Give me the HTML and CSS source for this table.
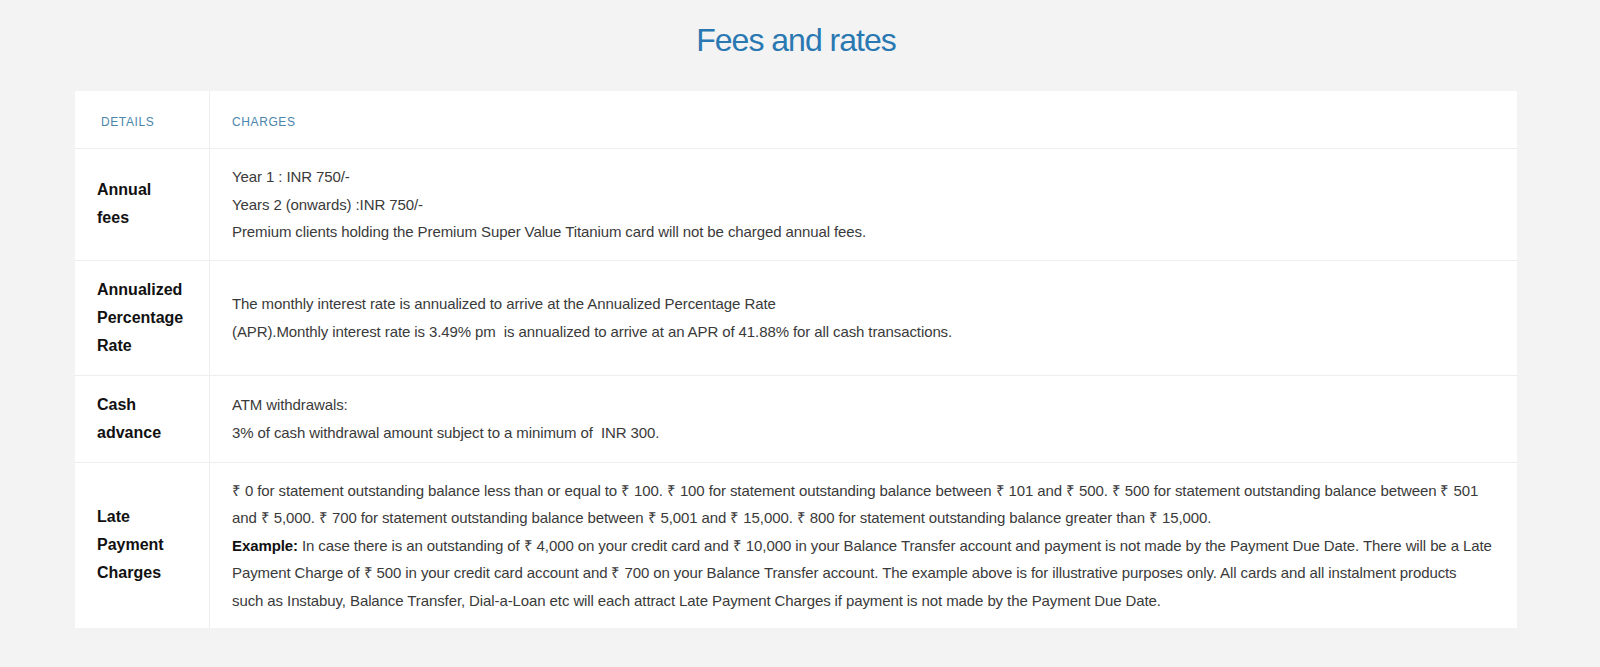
FILE: index.html
```html
<!DOCTYPE html>
<html lang="en">
<head>
<meta charset="utf-8">
<title>Fees and rates</title>
<link rel="stylesheet" href="styles.css">
</head>
<body>
<main class="page">
  <h1 class="title">Fees and rates</h1>
  <div class="fees">
    <div class="row head">
      <div class="label">DETAILS</div>
      <div class="value">CHARGES</div>
    </div>
    <div class="row">
      <div class="label">Annual fees</div>
      <div class="value">Year 1 : INR 750/-<br>Years 2 (onwards) :INR 750/-<br>Premium clients holding the Premium Super Value Titanium card will not be charged annual fees.</div>
    </div>
    <div class="row">
      <div class="label">Annualized Percentage Rate</div>
      <div class="value">The monthly interest rate is annualized to arrive at the Annualized Percentage Rate<br>(APR).Monthly interest rate is 3.49% pm&nbsp; is annualized to arrive at an APR of 41.88% for all cash transactions.</div>
    </div>
    <div class="row">
      <div class="label">Cash advance</div>
      <div class="value">ATM withdrawals:<br>3% of cash withdrawal amount subject to a minimum of&nbsp; INR 300.</div>
    </div>
    <div class="row">
      <div class="label">Late Payment Charges</div>
      <div class="value">₹ 0 for statement outstanding balance less than or equal to ₹ 100. ₹ 100 for statement outstanding balance between ₹ 101 and ₹ 500. ₹ 500 for statement outstanding balance between ₹ 501<br>and ₹ 5,000. ₹ 700 for statement outstanding balance between ₹ 5,001 and ₹ 15,000. ₹ 800 for statement outstanding balance greater than ₹ 15,000.<br><strong>Example:</strong> In case there is an outstanding of ₹ 4,000 on your credit card and ₹ 10,000 in your Balance Transfer account and payment is not made by the Payment Due Date. There will be a Late<br>Payment Charge of ₹ 500 in your credit card account and ₹ 700 on your Balance Transfer account. The example above is for illustrative purposes only. All cards and all instalment products<br>such as Instabuy, Balance Transfer, Dial-a-Loan etc will each attract Late Payment Charges if payment is not made by the Payment Due Date.</div>
    </div>
  </div>
</main>
</body>
</html>
```

FILE: styles.css
```css
html, body {
  margin: 0;
  padding: 0;
  background: #f3f3f3;
}

body {
  font-family: "Liberation Sans", Arial, sans-serif;
  color: #333;
}

.page {
  width: 1592px;
  padding-top: 20px;
  padding-bottom: 40px;
}

.title {
  margin: 0 0 31px;
  text-align: center;
  font-size: 32px;
  line-height: 40px;
  font-weight: 400;
  letter-spacing: -1px;
  color: #2a78b2;
}

.fees {
  width: 1442px;
  margin: 0 auto;
  background: #fff;
}

.row {
  display: grid;
  grid-template-columns: 135px 1fr;
  border-bottom: 1px solid #eeeeee;
}

.row:last-child {
  border-bottom: 0;
}

.label {
  display: flex;
  align-items: center;
  padding: 15px 25px 15px 22px;
  border-right: 1px solid #eeeeee;
  font-size: 16px;
  line-height: 28px;
  font-weight: 700;
  color: #111;
}

.value {
  align-self: center;
  padding: 14px 12px 14px 22px;
  font-size: 15px;
  line-height: 27.5px;
  letter-spacing: -0.1px;
  color: #3a3a3a;
  white-space: nowrap;
}

.value strong {
  color: #111;
}

.head .label,
.head .value {
  font-size: 12px;
  line-height: 27px;
  font-weight: 400;
  letter-spacing: 0.6px;
  color: #4a86ab;
  padding-top: 18px;
  padding-bottom: 12px;
}

.head .label {
  padding-left: 26px;
}
```
